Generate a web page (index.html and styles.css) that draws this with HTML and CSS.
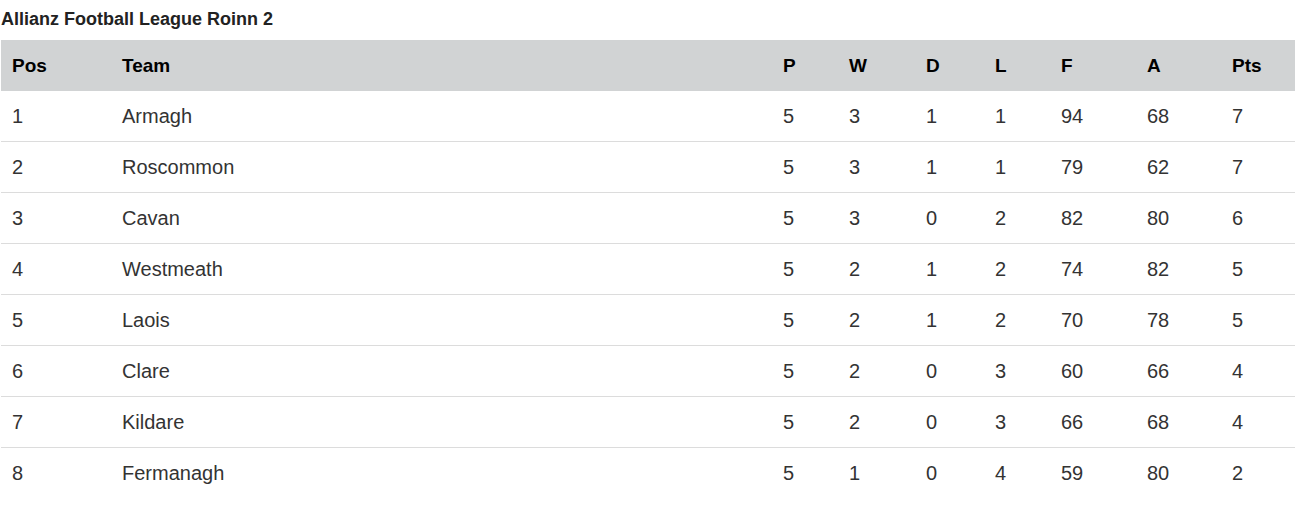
FILE: index.html
```html
<!DOCTYPE html>
<html lang="en">
<head>
<meta charset="utf-8">
<title>Allianz Football League Roinn 2</title>
<link rel="stylesheet" href="styles.css">
</head>
<body>
<div class="page">
  <h2 class="title">Allianz Football League Roinn 2</h2>
  <table class="league">
    <colgroup>
      <col class="c-pos"><col class="c-team"><col class="c-p"><col class="c-w"><col class="c-d"><col class="c-l"><col class="c-f"><col class="c-a"><col class="c-pts">
    </colgroup>
    <thead>
      <tr><th>Pos</th><th>Team</th><th>P</th><th>W</th><th>D</th><th>L</th><th>F</th><th>A</th><th>Pts</th></tr>
    </thead>
    <tbody>
      <tr><td>1</td><td>Armagh</td><td>5</td><td>3</td><td>1</td><td>1</td><td>94</td><td>68</td><td>7</td></tr>
      <tr><td>2</td><td>Roscommon</td><td>5</td><td>3</td><td>1</td><td>1</td><td>79</td><td>62</td><td>7</td></tr>
      <tr><td>3</td><td>Cavan</td><td>5</td><td>3</td><td>0</td><td>2</td><td>82</td><td>80</td><td>6</td></tr>
      <tr><td>4</td><td>Westmeath</td><td>5</td><td>2</td><td>1</td><td>2</td><td>74</td><td>82</td><td>5</td></tr>
      <tr><td>5</td><td>Laois</td><td>5</td><td>2</td><td>1</td><td>2</td><td>70</td><td>78</td><td>5</td></tr>
      <tr><td>6</td><td>Clare</td><td>5</td><td>2</td><td>0</td><td>3</td><td>60</td><td>66</td><td>4</td></tr>
      <tr><td>7</td><td>Kildare</td><td>5</td><td>2</td><td>0</td><td>3</td><td>66</td><td>68</td><td>4</td></tr>
      <tr><td>8</td><td>Fermanagh</td><td>5</td><td>1</td><td>0</td><td>4</td><td>59</td><td>80</td><td>2</td></tr>
    </tbody>
  </table>
</div>
</body>
</html>
```
FILE: styles.css
```css
html, body {
  margin: 0;
  padding: 0;
  background: #fff;
}
.page {
  padding-left: 1px;
  font-family: "Liberation Sans", Arial, sans-serif;
}
.title {
  margin: 0 0 10px 0;
  padding-top: 8px;
  font-size: 18px;
  line-height: 22px;
  font-weight: bold;
  color: #222;
}
.league {
  width: 1294px;
  border-collapse: collapse;
  table-layout: fixed;
}
.c-pos { width: 110px; }
.c-team { width: 661px; }
.c-p { width: 66px; }
.c-w { width: 77px; }
.c-d { width: 69px; }
.c-l { width: 66px; }
.c-f { width: 86px; }
.c-a { width: 85px; }
.c-pts { width: 74px; }
.league th {
  background: #d1d3d4;
  height: 51px;
  padding: 0 0 0 11px;
  text-align: left;
  vertical-align: middle;
  font-size: 19px;
  font-weight: bold;
  color: #000;
}
.league td {
  height: 50px;
  padding: 0 0 0 11px;
  text-align: left;
  vertical-align: middle;
  font-size: 20px;
  color: #333;
  border-bottom: 1px solid #dcdcdc;
}
.league tbody tr:last-child td {
  border-bottom: none;
}
```
